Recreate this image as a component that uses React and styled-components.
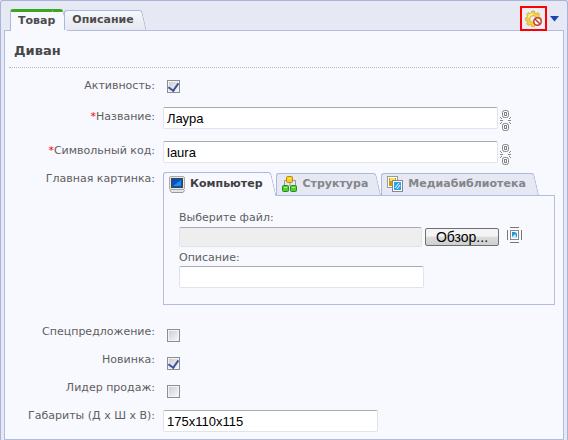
import React from "react";
import styled, { createGlobalStyle, css } from "styled-components";

const line = "#b3bedf";
const paper = "#f8f9fe";
const shade = "#e6e8f4";

const GlobalStyle = createGlobalStyle`
  * { box-sizing: border-box; }
  html, body, #root { height: 100%; }
  body {
    margin: 0;
    background: ${shade};
    color: #5e5e5e;
    font: 11px/14px "DejaVu Sans", Verdana, sans-serif;
  }
`;

const Window = styled.main`
  min-height: 100%;
  display: flex;
  flex-direction: column;
  padding: 8px 3px 0;
  border: 1px solid #a9b4d8;
  border-bottom: 0;
  border-radius: 3px 3px 0 0;
  background: ${shade};
`;

const Header = styled.header`
  display: flex;
  align-items: flex-end;
  justify-content: space-between;
  height: 21px;
  padding-left: 6px;
`;

const TabList = styled.div`
  display: flex;
  align-items: flex-end;
  gap: ${(p) => p.$gap}px;
`;

const tabEdge = css`
  border: 0 solid #adb9dc;
  border-top-width: 1px;
  background: ${(p) => (p.$active ? paper : shade)};
`;

const Tab = styled.button`
  ${tabEdge}
  position: relative;
  z-index: 1;
  margin-bottom: ${(p) => (p.$active ? -1 : 0)}px;
  padding: 0 5px 1px 7px;
  border-left-width: 1px;
  border-top-left-radius: 3px;
  color: #4c4c4c;
  font: bold 11px/16px "DejaVu Sans", Verdana, sans-serif;
  white-space: nowrap;
  cursor: pointer;

  &::after {
    ${tabEdge}
    content: "";
    position: absolute;
    z-index: -1;
    top: -1px;
    right: -3px;
    bottom: 0;
    width: 10px;
    border-right-width: 1px;
    border-top-right-radius: 3px;
    transform: skewX(13deg);
    transform-origin: top;
  }
`;

const MainTab = styled(Tab)`
  height: ${(p) => (p.$active ? 22 : 20)}px;
  ${(p) =>
    p.$active
      ? css`
          &, &::after { border-top: 3px solid #3aa81e; }
          &::after { top: -3px; }
        `
      : css`
          &, &::after { background: linear-gradient(#f7f8fc, #e6e7f0); }
        `}
`;

const SourceTab = styled(Tab)`
  display: flex;
  align-items: center;
  gap: ${(p) => (p.$active ? 4 : 5)}px;
  height: ${(p) => (p.$active ? 24 : 22)}px;
  padding: 0 5px 1px;
  color: ${(p) => (p.$active ? "#3f3f3f" : "#85858a")};
`;

const Tools = styled.div`
  display: flex;
  align-items: center;
  gap: 3px;
  z-index: 1;
  margin-bottom: -1px;
  padding-right: 5px;
`;

const SettingsButton = styled.button`
  display: grid;
  place-items: center;
  width: 27px;
  height: 25px;
  padding: 0;
  border: 2px solid #f00;
  background: #eceef7;
  cursor: pointer;
`;

const MenuButton = styled.button`
  display: grid;
  padding: 0;
  border: 0;
  background: none;
  cursor: pointer;
`;

const Panel = styled.section`
  flex: 1;
  padding: 0 4px 6px;
  border: 1px solid ${line};
  background: ${paper};
`;

const Title = styled.h1`
  height: 37px;
  margin: 0 0 11px;
  padding: 10px 5px 0;
  border-bottom: 1px dotted #b4b4bc;
  color: #474747;
  font: bold 13px/20px "DejaVu Sans", Verdana, sans-serif;
`;

const Form = styled.form`
  display: grid;
  grid-template-columns: 146px minmax(0, 1fr);
  column-gap: 8px;
`;

const Label = styled.label`
  padding-top: ${(p) => p.$top || 0}px;
  text-align: right;
  white-space: nowrap;
`;

const Required = styled.span`
  color: #f00;
`;

const Field = styled.div`
  display: flex;
  align-items: flex-start;
  gap: 2px;
  height: ${(p) => p.$height}px;
  padding-top: ${(p) => p.$top || 0}px;
  padding-right: 47px;
`;

const TextInput = styled.input`
  flex: ${(p) => (p.$width ? "0 1 auto" : "1")};
  width: ${(p) => (p.$width ? p.$width + "px" : "100%")};
  min-width: 0;
  height: 22px;
  padding: 0 3px;
  border: 1px solid #e0e3ea;
  border-top-color: #a9a9b0;
  border-radius: 2px;
  background: #fff;
  color: #000;
  font: 13px "Liberation Sans", Arial, sans-serif;

  &:read-only {
    height: 20px;
    background: #eee;
  }
`;

const Check = styled.input`
  appearance: none;
  display: grid;
  place-items: center;
  width: 13px;
  height: 13px;
  margin: 0 0 0 4px;
  border: 1px solid #8b8e92;
  background: linear-gradient(135deg, #c6cbd2, #fafafa);
  box-shadow: inset 0 0 0 1px #f4f4f4;

  &:checked::before {
    content: "";
    width: 5px;
    height: 8px;
    border: solid #3f539b;
    border-width: 0 2px 2px 0;
    transform: translateY(-1px) rotate(35deg);
  }
`;

const Sources = styled.div`
  padding-right: 4px;
  margin-bottom: 20px;
`;

const SourcePanel = styled.div`
  display: grid;
  gap: 4px;
  padding: 15px 15px 16px;
  border: 1px solid ${line};
`;

const Stack = styled.div`
  display: grid;
  gap: ${(p) => p.$gap}px;
`;

const FileRow = styled.div`
  display: flex;
  align-items: center;
  gap: 3px;
`;

const Browse = styled.button`
  width: 74px;
  height: 18px;
  padding: 0;
  border: 1px solid #707070;
  border-radius: 2px;
  background: linear-gradient(#f4f4f4 45%, #dcdcdc 50%, #cfcfcf);
  color: #000;
  font: 14px/16px "Liberation Sans", Arial, sans-serif;
`;

const LibraryButton = styled(MenuButton)`
  margin: 0 0 4px 5px;
`;

const LinkButton = styled(MenuButton)`
  margin-top: 3px;
`;

const GearIcon = () => (
  <svg width="18" height="17" viewBox="0 0 18 17" aria-hidden="true">
    <g fill="#f7ce3c" stroke="#c7962a" strokeWidth=".6">
      <path d="M6.8 1h2.6l.4 2 1.4.6 1.7-1.1 1.8 1.8-1.1 1.7.6 1.4 2 .4v2.5l-2 .4-.6 1.4 1.1 1.7-1.8 1.8-1.7-1.1-1.4.6-.4 1.9H6.8l-.4-2-1.4-.6-1.7 1.2-1.8-1.8 1.1-1.7L2 10.700 0.300 10.300V7.800l1.700-.4.6-1.400-1.100-1.700 1.800-1.800L5 3.600 6.400 3zM8 5.800a3.200 3.200 0 1 0 .1 0z" fillRule="evenodd" />
    </g>
    <path d="M3.500 7.500Q4.500 4 8 4" fill="none" stroke="#fff3ae" strokeWidth="1.300" />
    <circle cx="12.500" cy="11.500" r="3.700" fill="#fff" stroke="#c93a2c" strokeWidth="1.500" />
    <path d="m10 9 5 5" stroke="#c93a2c" strokeWidth="1.500" />
  </svg>
);

const ArrowIcon = () => (
  <svg width="9" height="7" viewBox="0 0 9 7" aria-hidden="true">
    <path d="M0 1h9L4.500 6.500z" fill="#1647b0" />
  </svg>
);

const ChainIcon = () => (
  <svg width="12" height="22" viewBox="0 0 12 22" fill="none" stroke="#858585" aria-hidden="true">
    <rect x="2.500" y=".5" width="6" height="7" rx="2" />
    <rect x="4.500" y="2.500" width="2" height="3" />
    <rect x="2.500" y="13.500" width="6" height="7" rx="2" />
    <rect x="4.500" y="15.500" width="2" height="3" />
    <path d="M0 10.500h3M8 10.500h3M0 7l2 2M11 7 9 9M0 14l2-2M11 14l-2-2" />
  </svg>
);

const ComputerIcon = () => (
  <svg width="17" height="17" viewBox="0 0 17 17" aria-hidden="true">
    <path d="M2.500 12.500h11l2 2-1.500 2H2.500L1 14.500z" fill="#e4e4e2" stroke="#999" />
    <rect x=".5" y=".5" width="15" height="13" rx="1.500" fill="#e9e9e5" stroke="#aaa" />
    <rect x="2.500" y="2.500" width="11" height="9" fill="#0752bd" stroke="#444" />
    <path d="M4 10 12 4v6z" fill="#218be6" />
  </svg>
);

const StructureIcon = () => (
  <svg width="16" height="16" viewBox="0 0 16 16" aria-hidden="true">
    <path d="M2.500 9V4.500h11V9M8 6v4" fill="none" stroke="#999" />
    <rect x="4.500" y=".5" width="6" height="6" rx="1" fill="#f7cf18" stroke="#b78a10" />
    <rect x=".5" y="9.500" width="6" height="6" rx="1" fill="#54cd32" stroke="#268e18" />
    <rect x="8.500" y="9.500" width="6" height="6" rx="1" fill="#54cd32" stroke="#268e18" />
    <path d="M6 2.500h3M2 11.500h3M10 11.500h3" stroke="#fff" opacity=".6" />
  </svg>
);

const MediaIcon = () => (
  <svg width="16" height="16" viewBox="0 0 16 16" aria-hidden="true">
    <rect x=".5" y=".5" width="10" height="11" fill="#fff" stroke="#999" />
    <path d="M2 2h7v8H2z" fill="#c79c10" />
    <path d="M3 2h5v3H3z" fill="#f9e251" />
    <rect x="5.500" y="4.500" width="10" height="11" fill="#fff" stroke="#888" />
    <path d="M7 6h7v8H7z" fill="#2aa2e8" />
    <path d="m8 12 4-5M10 13l3-4" stroke="#fff" />
  </svg>
);

const PictureIcon = () => (
  <svg width="15" height="16" viewBox="0 0 15 16" aria-hidden="true">
    <path d="M3 .5h9M3 15.500h9M.5 3v10M14.500 3v10" stroke="#777" />
    <rect x="3.500" y="3.500" width="8" height="9" fill="#fff" stroke="#888" />
    <path d="M5 5h5v6H5z" fill="#2394df" />
    <path d="m5 10 3-3 2 4H5zM8 5h2v2z" fill="#c7ecff" />
  </svg>
);

function TextRow({ id, label, value, height }) {
  return (
    <>
      <Label htmlFor={id} $top={3}><Required>*</Required>{label}</Label>
      <Field $height={height}>
        <TextInput id={id} defaultValue={value} />
        <LinkButton type="button" aria-label="Связь полей"><ChainIcon /></LinkButton>
      </Field>
    </>
  );
}

function CheckRow({ id, label, checked, top = 4 }) {
  return (
    <>
      <Label htmlFor={id}>{label}</Label>
      <Field $height={28} $top={top}>
        <Check type="checkbox" id={id} defaultChecked={checked} />
      </Field>
    </>
  );
}

export default function App() {
  return (
    <>
      <GlobalStyle />
      <Window>
        <Header>
          <TabList role="tablist" $gap={4}>
            <MainTab role="tab" aria-selected="true" $active>Товар</MainTab>
            <MainTab role="tab" aria-selected="false">Описание</MainTab>
          </TabList>
          <Tools>
            <SettingsButton aria-label="Настройки"><GearIcon /></SettingsButton>
            <MenuButton aria-label="Меню"><ArrowIcon /></MenuButton>
          </Tools>
        </Header>
        <Panel>
          <Title>Диван</Title>
          <Form>
            <CheckRow id="active" label="Активность:" checked top={1} />
            <TextRow id="name" label="Название:" value="Лаура" height={34} />
            <TextRow id="code" label="Символьный код:" value="laura" height={31} />
            <Label as="span" id="picture">Главная картинка:</Label>
            <Sources role="group" aria-labelledby="picture">
              <TabList role="tablist" $gap={8}>
                <SourceTab type="button" role="tab" aria-selected="true" $active><ComputerIcon />Компьютер</SourceTab>
                <SourceTab type="button" role="tab" aria-selected="false"><StructureIcon />Структура</SourceTab>
                <SourceTab type="button" role="tab" aria-selected="false"><MediaIcon />Медиабиблиотека</SourceTab>
              </TabList>
              <SourcePanel>
                <Stack $gap={2}>
                  <label htmlFor="file">Выберите файл:</label>
                  <FileRow>
                    <TextInput id="file" readOnly $width={243} />
                    <Browse type="button">Обзор...</Browse>
                    <LibraryButton type="button" aria-label="Выбрать изображение"><PictureIcon /></LibraryButton>
                  </FileRow>
                </Stack>
                <Stack $gap={1}>
                  <label htmlFor="about">Описание:</label>
                  <TextInput id="about" $width={245} />
                </Stack>
              </SourcePanel>
            </Sources>
            <CheckRow id="special" label="Спецпредложение:" />
            <CheckRow id="fresh" label="Новинка:" checked />
            <CheckRow id="leader" label="Лидер продаж:" />
            <Label htmlFor="size">Габариты (Д x Ш x В):</Label>
            <Field $height={23} $top={1}>
              <TextInput id="size" $width={215} defaultValue="175x110x115" />
            </Field>
          </Form>
        </Panel>
      </Window>
    </>
  );
}
